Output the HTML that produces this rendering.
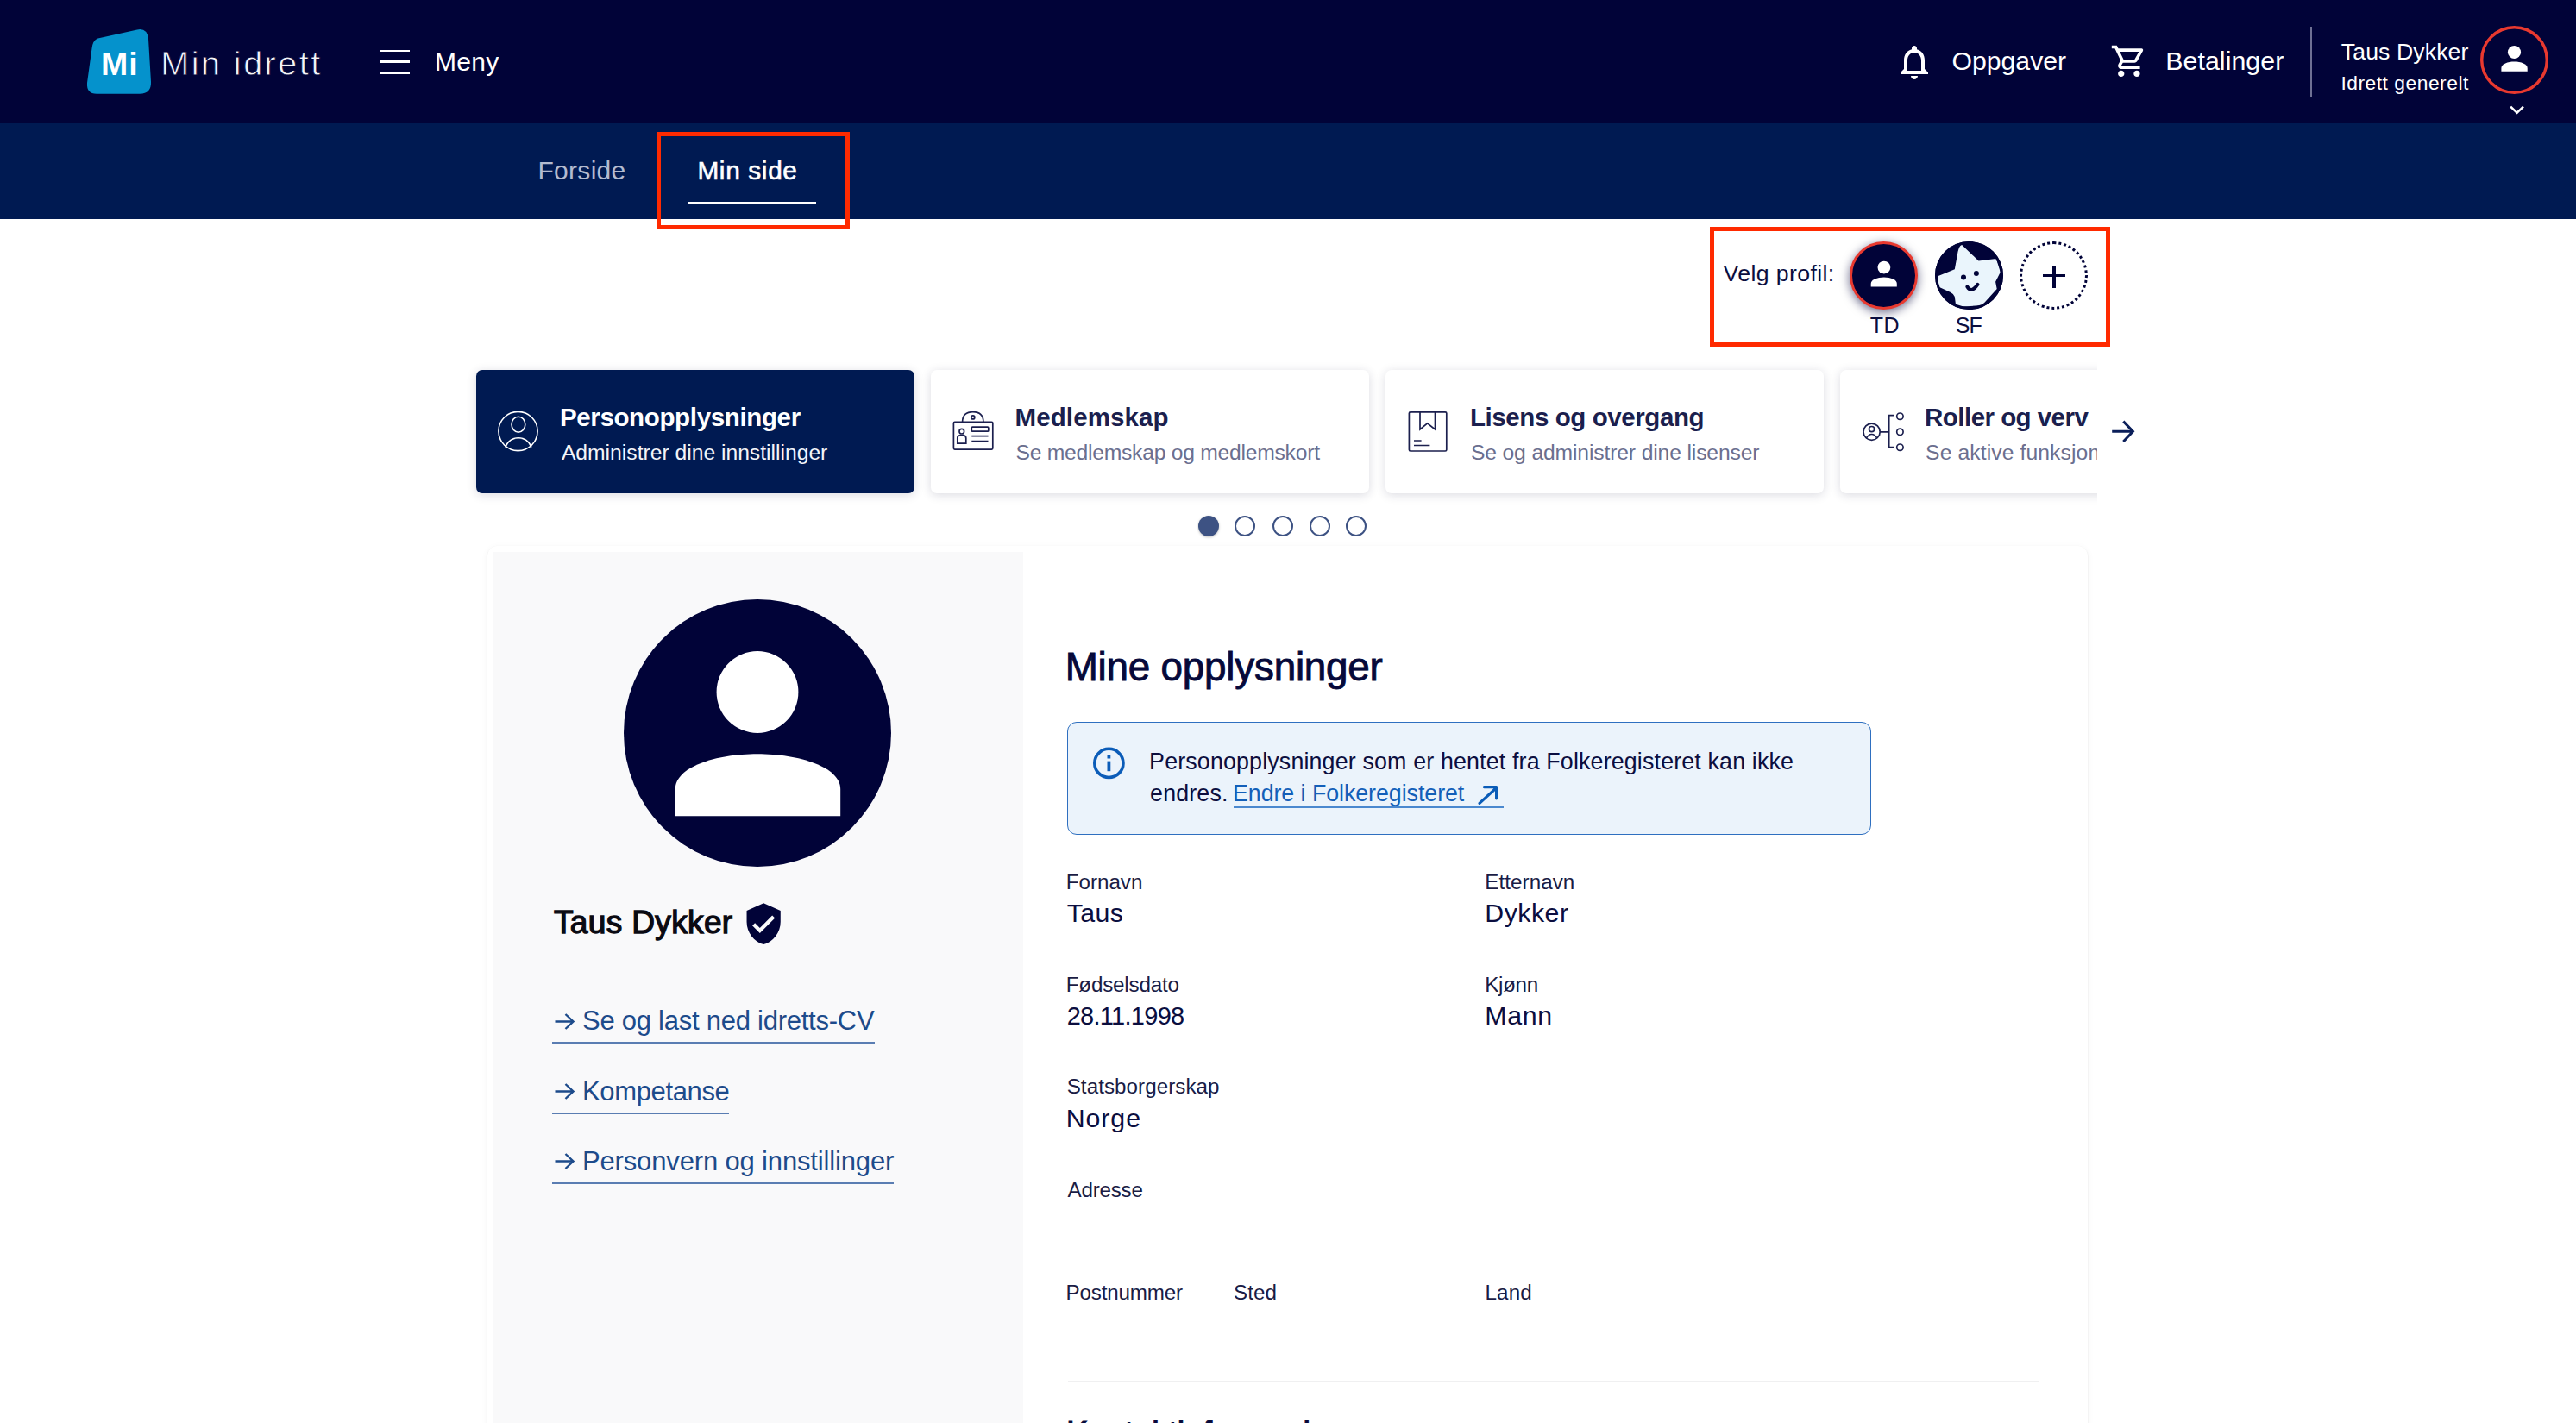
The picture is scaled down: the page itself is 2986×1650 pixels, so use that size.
<!DOCTYPE html>
<html lang="no">
<head>
<meta charset="utf-8">
<title>Min side - Min idrett</title>
<style>
html,body{margin:0;padding:0;}
body{width:2986px;height:1650px;overflow:hidden;position:relative;background:#ffffff;font-family:"Liberation Sans",sans-serif;}
.a{position:absolute;}
.t{position:absolute;white-space:pre;line-height:1;font-family:"Liberation Sans",sans-serif;}
svg{position:absolute;overflow:visible;}
</style>
</head>
<body>
<div class="a" style="left:0;top:0;width:2986px;height:143px;background:#010338;"></div>
<svg style="left:0;top:0" width="2986" height="143"><path d="M113.5 44.6 L159 34.4 Q170.5 32 172 45 L175 95 Q175.5 108.7 162 108.7 L112 108.7 Q100 108.7 101 96 L106.5 56 Q107.5 47 113.5 44.6 Z" fill="#0592cc"/></svg>
<div class="t" style="left:117.0px;top:55.8px;font-size:37.5px;color:#ffffff;font-weight:700;letter-spacing:1.0px;">Mi</div>
<div class="t" style="left:186.3px;top:54.1px;font-size:39.5px;color:#f4f4f8;letter-spacing:2.489px;-webkit-text-stroke:0.8px #010338;">Min idrett</div>
<div class="a" style="left:441px;top:57.7px;width:34px;height:2.8px;background:#fff;"></div>
<div class="a" style="left:441px;top:70.3px;width:34px;height:2.8px;background:#fff;"></div>
<div class="a" style="left:441px;top:83.1px;width:34px;height:2.8px;background:#fff;"></div>
<div class="t" style="left:504.0px;top:56.7px;font-size:30px;color:#ffffff;letter-spacing:0.333px;">Meny</div>
<svg style="left:2195.35px;top:48px" width="48" height="48" viewBox="0 0 24 24"><path fill="#fff" d="M12 22c1.1 0 2-.9 2-2h-4c0 1.1.89 2 2 2zm6-6v-5c0-3.07-1.64-5.64-4.5-6.32V4c0-.83-.67-1.5-1.5-1.5s-1.5.67-1.5 1.5v.68C7.63 5.36 6 7.92 6 11v5l-2 2v1h16v-1l-2-2zm-2 1H8v-6c0-2.48 1.51-4.5 4-4.5s4 2.02 4 4.5v6z"/></svg>
<div class="t" style="left:2262.5px;top:56.0px;font-size:30.2px;color:#ffffff;">Oppgaver</div>
<svg style="left:2446.1px;top:49px" width="43.7" height="43.7" viewBox="0 0 24 24"><path fill="#fff" d="M15.55 13c.75 0 1.41-.41 1.75-1.03l3.58-6.49c.37-.66-.11-1.48-.87-1.48H5.21l-.94-2H1v2h2l3.6 7.59-1.35 2.44C4.52 15.37 5.48 17 7 17h12v-2H7l1.1-2h7.45zM6.16 6h12.15l-2.76 5H8.53L6.16 6zM7 18c-1.1 0-1.99.9-1.99 2S5.9 22 7 22s2-.9 2-2-.9-2-2-2zm10 0c-1.1 0-1.99.9-1.99 2s.89 2 1.99 2 2-.9 2-2-.9-2-2-2z"/></svg>
<div class="t" style="left:2510.3px;top:55.9px;font-size:30.3px;color:#ffffff;letter-spacing:0.056px;">Betalinger</div>
<div class="a" style="left:2677.5px;top:31px;width:2px;height:81px;background:#6e7094;"></div>
<div class="t" style="left:2713.8px;top:47.1px;font-size:26.6px;color:#ffffff;letter-spacing:0.13px;">Taus Dykker</div>
<div class="t" style="left:2713.4px;top:85.0px;font-size:22.8px;color:#ffffff;letter-spacing:0.521px;">Idrett generelt</div>
<svg style="left:2870px;top:25px" width="90" height="112"><circle cx="44.5" cy="44.5" r="37.8" fill="none" stroke="#e8392f" stroke-width="3.4"/><circle cx="44.5" cy="35.5" r="7.6" fill="#fff"/><path d="M29.4 57.8 L29.4 54 C29.4 49 37 46.5 44.5 46.5 C52 46.5 59.7 49 59.7 54 L59.7 57.8 Z" fill="#fff"/><path d="M40.2 98.6 L47.6 105.6 L55 98.6" fill="none" stroke="#fff" stroke-width="2.6"/></svg>
<div class="a" style="left:0;top:143px;width:2986px;height:111px;background:#001a52;"></div>
<div class="t" style="left:623.5px;top:182.7px;font-size:30px;color:#b3bbd0;letter-spacing:0.283px;">Forside</div>
<div class="t" style="left:808.4px;top:182.9px;font-size:29.8px;color:#ffffff;letter-spacing:0.657px;-webkit-text-stroke:0.6px #ffffff;">Min side</div>
<div class="a" style="left:798px;top:234px;width:148px;height:2.5px;background:#fff;"></div>
<div class="a" style="left:761px;top:153px;width:224px;height:113px;box-sizing:border-box;border:5px solid #ff2a00;"></div>
<div class="a" style="left:1982px;top:263px;width:464px;height:139px;box-sizing:border-box;border:5px solid #ff2a00;"></div>
<div class="t" style="left:1997.6px;top:304.3px;font-size:26.7px;color:#0b0e3f;letter-spacing:0.364px;">Velg profil:</div>
<div class="a" style="left:2144.3px;top:280.2px;width:79px;height:79px;border-radius:50%;box-sizing:border-box;background:#010338;border:3px solid #e8392f;box-shadow:0 3px 12px rgba(1,3,56,0.6);"></div>
<svg style="left:2144.3px;top:280.2px" width="79" height="79"><circle cx="39.9" cy="30.1" r="7.4" fill="#fff"/><path d="M24.7 52.6 L24.7 49 C24.7 44.5 32 41.6 39.9 41.6 C47.8 41.6 54.8 44.5 54.8 49 L54.8 52.6 Z" fill="#fff"/></svg>
<div class="t" style="left:2167.8px;top:365.4px;font-size:25px;color:#0b0e3f;letter-spacing:0.4px;">TD</div>
<svg style="left:2242.5px;top:280.2px" width="79" height="79" viewBox="0 0 79 79"><defs><clipPath id="sfc"><circle cx="39.5" cy="39.5" r="38"/></clipPath></defs><circle cx="39.5" cy="39.5" r="39.5" fill="#010338"/><g clip-path="url(#sfc)"><path d="M30.9 3.7 Q28 5 26.5 12 L22.8 32.2 L3.2 40.3 L4 52.6 L18 59 Q22 61 22.8 64 L24.4 76 L54.5 74 L71.7 55 L70.1 46.8 L75.8 35.4 L70.9 20 L50.5 22.4 Z" fill="#eaf5fc"/></g><circle cx="39.5" cy="39.5" r="38" fill="none" stroke="#010338" stroke-width="3"/><circle cx="33" cy="41.6" r="3" fill="#010338"/><circle cx="47.9" cy="37.1" r="3" fill="#010338"/><path d="M37.4 52.6 Q42 60.5 49.4 49.8" fill="none" stroke="#010338" stroke-width="4" stroke-linecap="round"/></svg>
<div class="t" style="left:2266.7px;top:365.4px;font-size:25px;color:#0b0e3f;letter-spacing:-0.9px;">SF</div>
<div class="a" style="left:2341px;top:280px;width:79px;height:79px;border-radius:50%;box-sizing:border-box;border:3px dotted #010338;"></div>
<div class="a" style="left:2368px;top:319.5px;width:26px;height:3.2px;margin-top:-1.6px;background:#010338;"></div>
<div class="a" style="left:2379.4px;top:308px;width:3.2px;height:26px;background:#010338;"></div>
<div class="a" style="left:500px;top:395px;width:1931px;height:189.6px;overflow:hidden;">
<div class="a" style="left:52px;top:34px;width:508px;height:143px;border-radius:7px;background:#001a52;box-shadow:0 2px 12px rgba(30,30,70,0.16);"></div>
<div class="a" style="left:579px;top:34px;width:508px;height:143px;border-radius:7px;background:#ffffff;box-shadow:0 2px 12px rgba(30,30,70,0.16);"></div>
<div class="a" style="left:1106px;top:34px;width:508px;height:143px;border-radius:7px;background:#ffffff;box-shadow:0 2px 12px rgba(30,30,70,0.16);"></div>
<div class="a" style="left:1633px;top:34px;width:508px;height:143px;border-radius:7px;background:#ffffff;box-shadow:0 2px 12px rgba(30,30,70,0.16);"></div>
</div>
<div class="t" style="left:648.9px;top:469.2px;font-size:29.5px;color:#ffffff;font-weight:700;letter-spacing:-0.353px;">Personopplysninger</div>
<div class="t" style="left:650.9px;top:512.5px;font-size:24.7px;color:#f4f5f9;letter-spacing:-0.01px;">Administrer dine innstillinger</div>
<div class="t" style="left:1176.5px;top:469.2px;font-size:29.5px;color:#1b1f4e;font-weight:700;letter-spacing:0.111px;">Medlemskap</div>
<div class="t" style="left:1177.5px;top:512.5px;font-size:24.7px;color:#6b6f8f;letter-spacing:-0.259px;">Se medlemskap og medlemskort</div>
<div class="t" style="left:1703.9px;top:469.2px;font-size:29.5px;color:#1b1f4e;font-weight:700;letter-spacing:-0.412px;">Lisens og overgang</div>
<div class="t" style="left:1704.9px;top:512.5px;font-size:24.7px;color:#6b6f8f;letter-spacing:-0.143px;">Se og administrer dine lisenser</div>
<div class="a" style="left:0;top:0;width:2431px;height:600px;overflow:hidden;">
<div class="t" style="left:2231.1px;top:469.2px;font-size:29.5px;color:#1b1f4e;font-weight:700;letter-spacing:-0.538px;">Roller og verv</div>
<div class="t" style="left:2232.1px;top:512.5px;font-size:24.7px;color:#6b6f8f;letter-spacing:0.1px;">Se aktive funksjoner</div>
</div>
<svg style="left:570px;top:470px" width="62" height="62" viewBox="0 0 62 62" fill="none" stroke="#fff" stroke-width="1.6"><circle cx="30.5" cy="30" r="22.6"/><ellipse cx="30.9" cy="22.2" rx="7.9" ry="9"/><path d="M15.6 48.5 C19 41 24.5 37.8 30.9 37.8 C37.3 37.8 42.8 41 46 48.5"/></svg>
<svg style="left:1100px;top:470px" width="60" height="60" viewBox="0 0 60 60" fill="none" stroke="#1b1f4e" stroke-width="1.7"><rect x="5.4" y="19.3" width="45.4" height="31.8" rx="1.3"/><path d="M15.6 19.3 C15.6 11 20.2 7.6 27.8 7.6 C35.4 7.6 39.9 11 39.9 19.3"/><circle cx="27.8" cy="13.9" r="2"/><circle cx="14.8" cy="30.2" r="2.8"/><path d="M9.8 44.2 V38 Q9.8 34.8 13 34.8 H16.6 Q19.8 34.8 19.8 38 V44.2 Z"/><rect x="26.3" y="25.2" width="19.5" height="5" rx="1"/><path d="M26.3 35.7 H45.5 M26.3 41.7 H45.5"/></svg>
<svg style="left:1630px;top:470px" width="60" height="60" viewBox="0 0 60 60" fill="none" stroke="#1b1f4e" stroke-width="1.7"><rect x="3.4" y="7.8" width="43.4" height="45.2" rx="1.5"/><path d="M16 7.8 V28 L24.6 20.9 L33.5 28 V7.8"/><path d="M9 41 H17.6 M9 46.5 H27.4"/></svg>
<svg style="left:2150px;top:470px" width="60" height="60" viewBox="0 0 60 60" fill="none" stroke="#1b1f4e" stroke-width="1.7"><circle cx="19.6" cy="30.7" r="9.6"/><circle cx="19.6" cy="27.6" r="3.1"/><path d="M13.5 37.8 C15.5 34.5 17.5 33.5 19.6 33.5 C21.7 33.5 23.7 34.5 25.7 37.8"/><path d="M29.2 30.8 H39.7 M46 11.7 H39.7 V48.7 H46"/><circle cx="52.4" cy="12.7" r="3.7"/><circle cx="52.4" cy="30.8" r="3.7"/><circle cx="52.4" cy="48.7" r="3.7"/></svg>
<svg style="left:2440px;top:480px" width="40" height="40" viewBox="0 0 40 40" fill="none" stroke="#0b1f5a" stroke-width="3"><path d="M8.2 20.3 H32 M21.3 8.6 L32.4 20.3 L21.3 32"/></svg>
<div class="a" style="left:1388.6px;top:597.7px;width:24px;height:24px;border-radius:50%;background:#3d5283;box-shadow:0 1px 3px rgba(0,0,0,0.25);"></div>
<div class="a" style="left:1431.3px;top:597.7px;width:24px;height:24px;border-radius:50%;box-sizing:border-box;border:2px solid #3d5283;"></div>
<div class="a" style="left:1475.0px;top:597.7px;width:24px;height:24px;border-radius:50%;box-sizing:border-box;border:2px solid #3d5283;"></div>
<div class="a" style="left:1517.8px;top:597.7px;width:24px;height:24px;border-radius:50%;box-sizing:border-box;border:2px solid #3d5283;"></div>
<div class="a" style="left:1560.3px;top:597.7px;width:24px;height:24px;border-radius:50%;box-sizing:border-box;border:2px solid #3d5283;"></div>
<div class="a" style="left:565px;top:632.6px;width:1855px;height:1100px;border-radius:12px;background:#fff;box-shadow:0 1px 2px rgba(0,0,0,0.10),0 2px 8px rgba(0,0,0,0.05);"></div>
<div class="a" style="left:572px;top:640px;width:614px;height:1100px;background:#f9f9fa;"></div>
<svg style="left:723.4px;top:694.5px" width="310" height="310" viewBox="0 0 310 310"><circle cx="155" cy="155" r="155" fill="#010338"/><circle cx="155" cy="107.5" r="47.4" fill="#fff"/><path d="M59.7 251.2 L59.7 220 C59.7 194 107 179.2 155 179.2 C203 179.2 251.2 194 251.2 220 L251.2 251.2 Z" fill="#fff"/></svg>
<div class="t" style="left:642.0px;top:1050.6px;font-size:37.1px;color:#0a0a12;letter-spacing:0.32px;-webkit-text-stroke:1.3px #0a0a12;">Taus Dykker</div>
<svg style="left:858.96px;top:1045.2px" width="52.3" height="52.3" viewBox="0 0 24 24"><path fill="#010338" d="M12 1L3 5v6c0 5.55 3.84 10.74 9 12 5.16-1.26 9-6.45 9-12V5l-9-4zm-2 16l-4-4 1.41-1.41L10 14.17l6.59-6.59L18 9l-8 8z"/></svg>
<svg style="left:640px;top:1172.7px" width="30" height="24" viewBox="0 0 30 24" fill="none" stroke="#1d4b8b" stroke-width="2.4"><path d="M3.5 11.5 H24.5 M15.5 3 L24.5 11.5 L15.5 20"/></svg>
<div class="t" style="left:675.0px;top:1168.4px;font-size:31px;color:#1d4b8b;letter-spacing:-0.25px;">Se og last ned idretts-CV</div>
<div class="a" style="left:640px;top:1208px;width:374px;height:2px;background:#5a7db2;"></div>
<svg style="left:640px;top:1254.2px" width="30" height="24" viewBox="0 0 30 24" fill="none" stroke="#1d4b8b" stroke-width="2.4"><path d="M3.5 11.5 H24.5 M15.5 3 L24.5 11.5 L15.5 20"/></svg>
<div class="t" style="left:675.0px;top:1249.9px;font-size:31px;color:#1d4b8b;letter-spacing:-0.356px;">Kompetanse</div>
<div class="a" style="left:640px;top:1290px;width:205px;height:2px;background:#5a7db2;"></div>
<svg style="left:640px;top:1335.3px" width="30" height="24" viewBox="0 0 30 24" fill="none" stroke="#1d4b8b" stroke-width="2.4"><path d="M3.5 11.5 H24.5 M15.5 3 L24.5 11.5 L15.5 20"/></svg>
<div class="t" style="left:675.0px;top:1331.0px;font-size:31px;color:#1d4b8b;letter-spacing:-0.154px;">Personvern og innstillinger</div>
<div class="a" style="left:640px;top:1371px;width:396px;height:2px;background:#5a7db2;"></div>
<div class="t" style="left:1234.7px;top:750.9px;font-size:45.8px;color:#06093a;letter-spacing:-0.219px;-webkit-text-stroke:0.9px #06093a;">Mine opplysninger</div>
<div class="a" style="left:1237px;top:837px;width:932px;height:131px;box-sizing:border-box;border:1.6px solid #2e6fc0;border-radius:11px;background:#ebf3fb;"></div>
<svg style="left:1265px;top:864px" width="42" height="42" viewBox="0 0 42 42"><circle cx="20.4" cy="20.9" r="16.6" fill="none" stroke="#0b5cb8" stroke-width="3.6"/><rect x="18.5" y="11.9" width="3.8" height="3.6" fill="#0b5cb8"/><rect x="18.5" y="18.6" width="3.8" height="11.6" fill="#0b5cb8"/></svg>
<div class="t" style="left:1332.1px;top:869.7px;font-size:26.8px;color:#0b0e3f;letter-spacing:0.16px;">Personopplysninger som er hentet fra Folkeregisteret kan ikke</div>
<div class="t" style="left:1333.1px;top:906.7px;font-size:26.8px;color:#0b0e3f;letter-spacing:0.15px;">endres.</div>
<div class="t" style="left:1429.0px;top:906.7px;font-size:26.8px;color:#135fb9;letter-spacing:-0.059px;">Endre i Folkeregisteret</div>
<svg style="left:1710px;top:908px" width="30" height="30" viewBox="0 0 30 30" fill="none" stroke="#0a5cb8" stroke-width="3.2" stroke-linecap="round" stroke-linejoin="round"><path d="M5 23.4 L23.8 6.2 M10.4 4.6 H24.6 V17.8"/></svg>
<div class="a" style="left:1430.3px;top:935px;width:313px;height:1.6px;background:#4a88cf;"></div>
<div class="t" style="left:1235.7px;top:1010.7px;font-size:24.2px;color:#1a1c45;">Fornavn</div>
<div class="t" style="left:1721.3px;top:1010.7px;font-size:24.2px;color:#1a1c45;letter-spacing:0.062px;">Etternavn</div>
<div class="t" style="left:1235.7px;top:1129.7px;font-size:24.2px;color:#1a1c45;letter-spacing:-0.18px;">Fødselsdato</div>
<div class="t" style="left:1721.3px;top:1129.7px;font-size:24.2px;color:#1a1c45;letter-spacing:-0.325px;">Kjønn</div>
<div class="t" style="left:1236.7px;top:1248.4px;font-size:24.2px;color:#1a1c45;letter-spacing:0.05px;">Statsborgerskap</div>
<div class="t" style="left:1237.6px;top:1367.5px;font-size:24.2px;color:#1a1c45;letter-spacing:-0.233px;">Adresse</div>
<div class="t" style="left:1235.6px;top:1486.9px;font-size:24.2px;color:#1a1c45;letter-spacing:-0.178px;">Postnummer</div>
<div class="t" style="left:1430.1px;top:1486.9px;font-size:24.2px;color:#1a1c45;letter-spacing:0.067px;">Sted</div>
<div class="t" style="left:1721.4px;top:1486.9px;font-size:24.2px;color:#1a1c45;letter-spacing:0.167px;">Land</div>
<div class="t" style="left:1236.7px;top:1043.5px;font-size:30.3px;color:#0b0e3f;letter-spacing:0.433px;">Taus</div>
<div class="t" style="left:1721.3px;top:1043.5px;font-size:30.3px;color:#0b0e3f;letter-spacing:0.5px;">Dykker</div>
<div class="t" style="left:1236.7px;top:1163.8px;font-size:29px;color:#0b0e3f;letter-spacing:-0.722px;">28.11.1998</div>
<div class="t" style="left:1721.3px;top:1162.6px;font-size:30.3px;color:#0b0e3f;letter-spacing:0.7px;">Mann</div>
<div class="t" style="left:1235.7px;top:1281.6px;font-size:30.3px;color:#0b0e3f;letter-spacing:0.95px;">Norge</div>
<div class="t" style="left:1236.0px;top:1642.7px;font-size:38px;color:#06093a;-webkit-text-stroke:1.1px #06093a;">Kontaktinformasjon</div>
<div class="a" style="left:1237.6px;top:1601px;width:1126.6px;height:2px;background:#f0f0f1;"></div>
</body>
</html>
